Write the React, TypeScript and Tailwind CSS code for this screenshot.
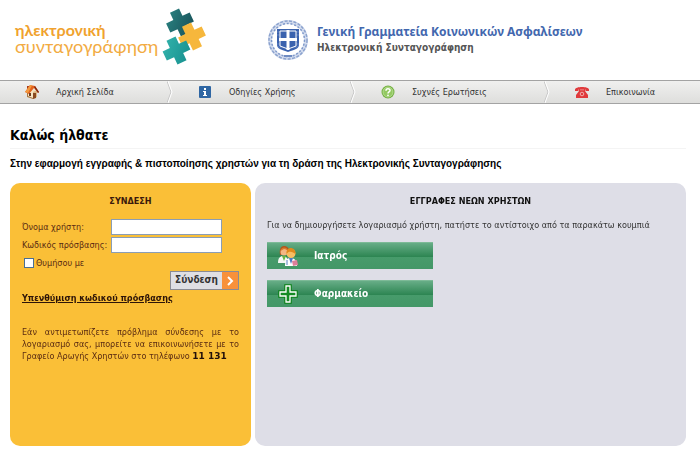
import type { ReactNode } from 'react';

const NAV_ITEMS: { label: string; icon: ReactNode }[] = [
  { label: 'Αρχική Σελίδα', icon: <HouseIcon /> },
  { label: 'Οδηγίες Χρήσης', icon: <InfoIcon /> },
  { label: 'Συχνές Ερωτήσεις', icon: <HelpIcon /> },
  { label: 'Επικοινωνία', icon: <PhoneIcon /> },
];

function HouseIcon() {
  return (
    <svg viewBox="0 0 16 16" className="h-4 w-4 shrink-0">
      <path d="M3 8v5l6 2 4-2V8L9 5z" fill="#f6e5c4" />
      <path d="M9 15V8l4-2v7z" fill="#dcb985" />
      <path d="M3 8v5l6 2v-1l-5-2V8z" fill="#a87845" />
      <path d="M3 2h2v4H3z" fill="#a63a1c" />
      <path d="M1 8 6 1l5 1 4 6-1 1-4-5-5 6z" fill="#e2631f" />
      <path d="M1 8 6 1l2 .5L4 9z" fill="#f39a3e" />
      <path d="m10 3 1-1 4 6-1 1z" fill="#7e2713" />
      <path d="M9 9h3v5l-3 1z" fill="#8a4a20" />
      <path d="M5 9h2v3H5z" fill="#6d3a1d" />
    </svg>
  );
}

function InfoIcon() {
  return (
    <svg viewBox="0 0 16 16" className="h-4 w-4 shrink-0">
      <rect x="2" y="2" width="12" height="12" rx="1" fill="#2f66a3" />
      <path d="M7 4h2v2H7zM6 7h3v4h1v1H6v-1h1V8H6z" fill="#fff" />
    </svg>
  );
}

function HelpIcon() {
  return (
    <svg viewBox="0 0 16 16" className="h-4 w-4 shrink-0">
      <circle cx="8" cy="8" r="6.5" fill="#75b043" />
      <circle cx="8" cy="8" r="5" fill="#93c961" stroke="#c6e6a8" strokeWidth=".7" />
      <path d="M6 6.7C6 3.9 10 4.1 10 6.4 10 8 8 7.9 8 9.6" fill="none" stroke="#fff" strokeWidth="1.5" />
      <circle cx="8" cy="11.3" r=".9" fill="#fff" />
    </svg>
  );
}

function PhoneIcon() {
  return (
    <svg viewBox="0 0 16 16" className="h-4 w-4 shrink-0">
      <path d="M1 7V5.500C1 2 15 2 15 5.500V7h-3.500V5.500h-7V7z" fill="#e03a3c" />
      <path d="M5 5h6v2l3 4v3H2v-3l3-4z" fill="#e03a3c" />
      <path d="M7 5v1.500M9 5v1.500" stroke="#f6c9c6" strokeWidth=".7" />
      <circle cx="8" cy="10" r="1.8" fill="none" stroke="#f6c9c6" strokeWidth=".8" />
    </svg>
  );
}

function DoctorsIcon() {
  return (
    <svg viewBox="0 0 20 20" className="h-5 w-5 shrink-0">
      <path d="M0 17c0-5 2-7 5-7s5 2 5 7z" fill="#f5f7f4" />
      <path d="m4 10 2 5 2-5z" fill="#69b53e" />
      <path d="M2 9C1 3 3 0 6 0s6 2 5 8z" fill="#b4561d" />
      <circle cx="6" cy="6" r="3.5" fill="#f4b784" />
      <path d="M2.500 5C3 1 8 0 10 4L6 3z" fill="#d87a2c" />
      <path d="M7 20c0-6 2-8 5.500-8s6.500 2 6.500 8z" fill="#fff" />
      <path d="m11 12 2 6 2-6z" fill="#4b78c4" />
      <circle cx="13" cy="7.5" r="4.5" fill="#f8bd62" />
      <path d="M8.500 8C8 3 11 2 13 2s5 2 4.500 6C15 6 11 4 8.500 8z" fill="#e08a1d" />
      <path d="m14 15 5-1 1 5-5 1z" fill="#dc7f9b" />
      <path d="M9 14v5" stroke="#547fc0" />
    </svg>
  );
}

function CrossIcon() {
  return (
    <svg viewBox="0 0 20 20" className="h-5 w-5 shrink-0">
      <path d="M7 1h6v6h6v6h-6v6H7v-6H1V7h6z" fill="#159021" stroke="#0b8217" strokeWidth="1.5" />
      <path d="M8 2h4v6h6v4h-6v6H8v-6H2V8h6z" fill="#168b24" stroke="#fff" strokeWidth="1.3" />
    </svg>
  );
}

function LogoCrosses() {
  return (
    <svg viewBox="0 0 46 58" className="h-[58px] w-[46px] shrink-0">
      <defs>
        <linearGradient id="dark" x1="0" y1="0" x2="1" y2="1">
          <stop offset="0" stopColor="#2b8583" />
          <stop offset="1" stopColor="#174d56" />
        </linearGradient>
        <linearGradient id="teal" x1="0" y1="0" x2="1" y2="1">
          <stop offset="0" stopColor="#35b5ad" />
          <stop offset="1" stopColor="#148d8d" />
        </linearGradient>
      </defs>
      <path d="M-5-13H5v8h8V5H5v8H-5V5h-8V-5h8z" transform="translate(18 14.500) rotate(-25)" fill="url(#dark)" />
      <path d="M-5-13H5v8h8V5H5v8H-5V5h-8V-5h8z" transform="translate(30 28.500) rotate(-25)" fill="#f6b73c" />
      <path d="M-5-13H5v8h8V5H5v8H-5V5h-8V-5h8z" transform="translate(14.500 42.500) rotate(-25)" fill="url(#teal)" />
    </svg>
  );
}

function Emblem() {
  return (
    <svg viewBox="0 0 42 42" className="h-[42px] w-[42px] shrink-0">
      <circle cx="21" cy="21" r="18" fill="none" stroke="#d3dcee" strokeWidth="4" />
      <circle cx="21" cy="21" r="19" fill="none" stroke="#8ba2ce" strokeWidth="1.5" strokeDasharray="3 1.5" />
      <circle cx="21" cy="21" r="16.5" fill="none" stroke="#7f99ca" strokeWidth="1.5" strokeDasharray="2 1.8" />
      <path d="M10 10h22v15c0 5-3 5-11 8-8-3-11-3-11-8z" fill="#3a62ae" />
      <path d="M10 13h22M10 16h22M10 25h22M11 28h20" stroke="#6d8cc6" strokeWidth=".8" />
      <path d="M13 12h16v15l-8 3-8-3z" fill="#3a62ae" stroke="#fff" />
      <path d="M19.500 11h3v8H30v3h-7.500v9h-3v-9H12v-3h7.500z" fill="#fff" />
      <path d="M17 37h8" stroke="#6f8cc2" strokeWidth="2" />
    </svg>
  );
}

function Chevron() {
  return (
    <svg viewBox="0 0 6 22" className="h-[22px] w-[6px] shrink-0">
      <path d="m0 0 4 11-4 11" fill="none" stroke="#c6c6c6" />
      <path d="m1 0 4 11-4 11" fill="none" stroke="#fff" />
    </svg>
  );
}

function Header() {
  return (
    <header className="flex h-20 items-start">
      <a href="#" className="flex w-[267px] shrink-0 items-start pt-2 pl-[15px]">
        <div className="w-[147px] pt-[14px] font-['Lato','Noto_Sans',sans-serif] whitespace-nowrap text-[#f0a22e]">
          <p className="text-[16px] leading-4 font-bold">ηλεκτρονική</p>
          <p className="text-[18px] leading-4 text-[#f2ab42]">συνταγογράφηση</p>
        </div>
        <LogoCrosses />
      </a>
      <div className="flex items-start pt-[19px]">
        <Emblem />
        <div className="pt-1 pl-2 font-bold">
          <p className="font-['Noto_Sans',sans-serif] text-[12px] leading-[18px] text-[#4267ae]">Γενική Γραμματεία Κοινωνικών Ασφαλίσεων</p>
          <p className="text-[10px] leading-[14px] text-[#555]">Ηλεκτρονική Συνταγογράφηση</p>
        </div>
      </div>
    </header>
  );
}

function Nav() {
  return (
    <nav className="grid h-6 grid-cols-[173fr_183fr_194fr_150fr] border-y border-[#a3a3a3] bg-linear-to-b from-[#f0f0ef] to-[#dededc]">
      {NAV_ITEMS.map((item, i) => (
        <div key={item.label} className="flex items-center justify-between">
          <a href="#" className="flex items-center gap-4 pl-6 text-[#333]">
            {item.icon}
            {item.label}
          </a>
          {i < NAV_ITEMS.length - 1 && <Chevron />}
        </div>
      ))}
    </nav>
  );
}

function LoginPanel() {
  return (
    <section className="rounded-[10px] bg-[#fabf37] px-3 pt-3 text-[#5b2c12]">
      <h2 className="text-center leading-3 font-bold text-[#3a1a0c]">ΣΥΝΔΕΣΗ</h2>
      <form className="pt-3" onSubmit={(e) => e.preventDefault()}>
        <div className="grid grid-cols-[89px_111px] gap-y-[2px] leading-4">
          <label htmlFor="username" className="whitespace-nowrap">Όνομα χρήστη:</label>
          <input id="username" type="text" autoFocus className="h-4 min-w-0 border border-[#8a9db5] bg-white px-px text-black outline-none" />
          <label htmlFor="password" className="whitespace-nowrap">Κωδικός πρόσβασης:</label>
          <input id="password" type="password" className="h-4 min-w-0 border border-[#8a9db5] bg-white px-px text-black outline-none" />
        </div>
        <div className="flex items-center gap-[2px] pt-1 pl-[2px] leading-3">
          <input id="remember" type="checkbox" className="h-[10px] w-[10px] appearance-none border border-[#4a6f94] bg-white" />
          <label htmlFor="remember">Θυμήσου με</label>
        </div>
        <div className="flex justify-end pt-[2px]">
          <button type="submit" className="flex h-[19px] items-stretch border border-[#8b8b93] bg-[#dfdfe4] text-[10px] leading-4 font-bold text-[#333]">
            <span className="px-1">Σύνδεση</span>
            <span className="flex w-4 items-center justify-center bg-[#f8913a]">
              <svg viewBox="0 0 8 10" className="h-[10px] w-2">
                <path d="m2 1 4 4-4 4" fill="none" stroke="#fff" strokeWidth="2" />
              </svg>
            </span>
          </button>
        </div>
      </form>
      <a href="#" className="inline-block leading-4 font-bold text-[#2d1408] underline">Υπενθύμιση κωδικού πρόσβασης</a>
      <p className="pt-5 text-justify leading-3">
        Εάν αντιμετωπίζετε πρόβλημα σύνδεσης με το λογαριασμό σας, μπορείτε να επικοινωνήσετε με το Γραφείο Αρωγής Χρηστών στο τηλέφωνο{' '}
        <b className="font-['DejaVu_Sans',sans-serif] text-[#22100a]">11 131</b>
      </p>
    </section>
  );
}

function RegisterButton({ icon, label }: { icon: ReactNode; label: string }) {
  return (
    <button
      type="button"
      className="flex h-[27px] w-[166px] items-center gap-4 border-t border-[#7dba97] bg-[linear-gradient(#67ad87,#2e8653_52%,#479b6b_54%,#439767)] pl-[11px] text-[10px] font-bold text-white"
    >
      {icon}
      {label}
    </button>
  );
}

function RegisterPanel() {
  return (
    <section className="rounded-[10px] bg-[#dedee7] px-3 pt-3 text-[#333]">
      <h2 className="text-center leading-3 font-bold text-[#111]">ΕΓΓΡΑΦΕΣ ΝΕΩΝ ΧΡΗΣΤΩΝ</h2>
      <p className="pt-3 leading-3">Για να δημιουργήσετε λογαριασμό χρήστη, πατήστε το αντίστοιχο από τα παρακάτω κουμπιά</p>
      <div className="flex flex-col gap-[11px] pt-[11px]">
        <RegisterButton icon={<DoctorsIcon />} label="Ιατρός" />
        <RegisterButton icon={<CrossIcon />} label="Φαρμακείο" />
      </div>
    </section>
  );
}

export default function App() {
  return (
    <div className="min-h-screen bg-white font-['DejaVu_Sans_Condensed','Noto_Sans',sans-serif] text-[9px] leading-3">
      <Header />
      <Nav />
      <main className="pr-[14px] pl-[10px]">
        <h1 className="border-b border-[#f4f4f4] pt-[22px] pb-1 text-[14px] leading-[18px] font-bold">Καλώς ήλθατε</h1>
        <p className="pt-2 pb-3 font-['Liberation_Sans',sans-serif] text-[10px] leading-[14px] font-bold">
          Στην εφαρμογή εγγραφής &amp; πιστοποίησης χρηστών για τη δράση της Ηλεκτρονικής Συνταγογράφησης
        </p>
        <div className="grid min-h-[263px] grid-cols-[241fr_431fr] gap-1">
          <LoginPanel />
          <RegisterPanel />
        </div>
      </main>
    </div>
  );
}
